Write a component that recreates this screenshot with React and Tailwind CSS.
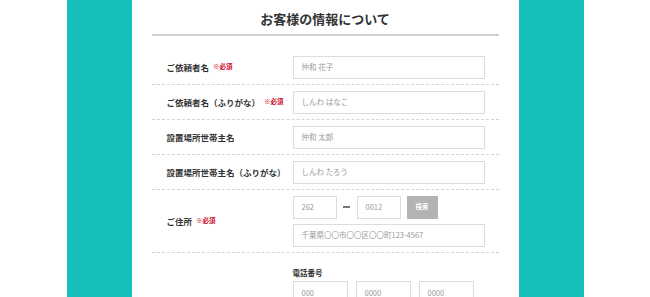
const jp = { fontFamily: '"Noto Sans CJK JP", "Noto Sans", sans-serif' };

function Req() {
  return <span className="ml-[4px] text-[6.5px] font-bold text-[#d0021b]">※必須</span>;
}

function Field({ placeholder, className = 'w-[192px]' }) {
  return (
    <div className={`h-[23px] border border-[#dcdcdc] bg-white flex items-center px-[8px] text-[7.5px] text-[#999] whitespace-nowrap ${className}`}>
      {placeholder}
    </div>
  );
}

function Row({ label, required, children, className = 'h-[35px]' }) {
  return (
    <div className={`flex items-center border-b border-dashed border-[#d4d4d4] ${className}`}>
      <div className="w-[141px] pl-[15px] text-[8.5px] font-bold text-[#333] flex items-center whitespace-nowrap">
        {label}
        {required && <Req />}
      </div>
      <div>{children}</div>
    </div>
  );
}

export default function App() {
  return (
    <div className="w-[650px] h-[297px] overflow-hidden bg-white" style={jp}>
      <div className="mx-auto w-[517px] h-full bg-[#14c0b9] flex justify-center">
        <div className="w-[387px] h-full bg-white px-[20px]">
          <h2 className="h-[36px] flex items-center justify-center pt-[4px] text-[13px] font-bold text-[#333] border-b-2 border-[#d0d0d0]">
            お客様の情報について
          </h2>
          <div className="pt-[14px]">
            <Row label="ご依頼者名" required>
              <Field placeholder="仲和 花子" />
            </Row>
            <Row label="ご依頼者名（ふりがな）" required>
              <Field placeholder="しんわ はなこ" />
            </Row>
            <Row label="設置場所世帯主名">
              <Field placeholder="仲和 太郎" />
            </Row>
            <Row label="設置場所世帯主名（ふりがな）">
              <Field placeholder="しんわ たろう" />
            </Row>
            <Row label="ご住所" required className="h-[63px]">
              <div className="flex flex-col gap-[5px]">
                <div className="flex items-center">
                  <Field placeholder="262" className="w-[44px]" />
                  <div className="w-[20px] flex justify-center">
                    <div className="w-[7px] h-[1.5px] bg-[#777]" />
                  </div>
                  <Field placeholder="0012" className="w-[44px]" />
                  <div className="ml-[6px] h-[23px] w-[31px] bg-[#b3b3b3] text-white text-[6.5px] font-bold flex items-center justify-center">
                    検索
                  </div>
                </div>
                <Field placeholder="千葉県〇〇市〇〇区〇〇町123-4567" />
              </div>
            </Row>
            <div className="flex pt-[14px]">
              <div className="w-[141px]" />
              <div>
                <div className="text-[7.5px] font-bold text-[#333] mb-[3px]">電話番号</div>
                <div className="flex gap-[8px]">
                  <Field placeholder="000" className="w-[55px]" />
                  <Field placeholder="0000" className="w-[55px]" />
                  <Field placeholder="0000" className="w-[55px]" />
                </div>
              </div>
            </div>
          </div>
        </div>
      </div>
    </div>
  );
}
